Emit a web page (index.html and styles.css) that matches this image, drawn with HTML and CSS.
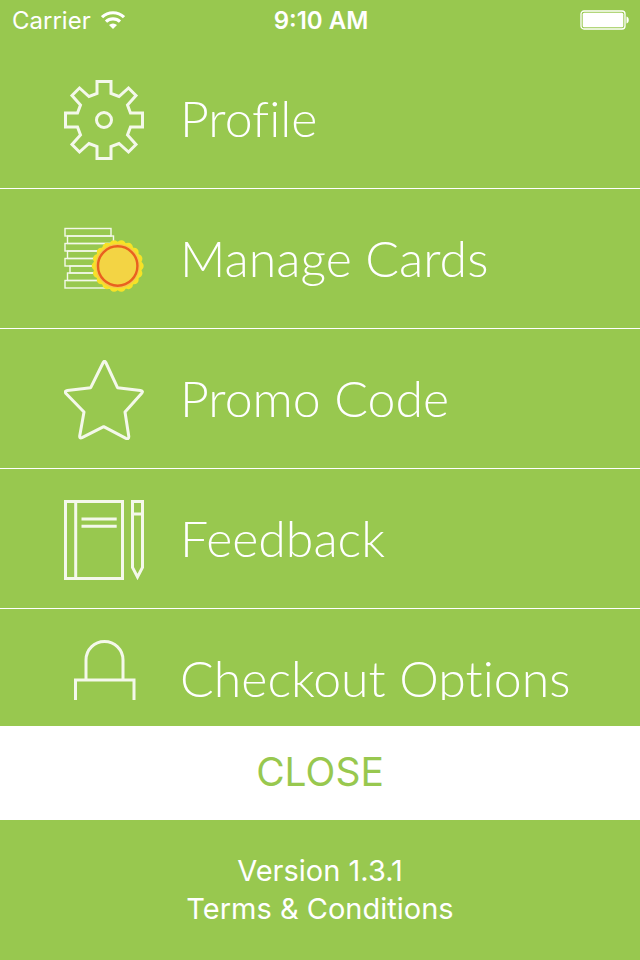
FILE: index.html
```html
<!DOCTYPE html>
<html lang="en">
<head>
    <meta charset="UTF-8">
    <meta name="viewport" content="width=device-width, initial-scale=1.0">
    <title>Menu</title>
    <link rel="stylesheet" href="styles.css">
</head>
<body>
    <header class="status-bar">
        <div class="carrier">
            <span>Carrier</span>
            <svg class="wifi" viewBox="0 0 24 18" width="24" height="18">
                <path d="M1 6.2a15.8 15.8 0 0 1 22 0M5 10.7a10.2 10.2 0 0 1 14 0" fill="none" stroke="#fff" stroke-width="3.2"/>
                <path d="M12 18l-4-4a6 6 0 0 1 8 0z" fill="#fff"/>
            </svg>
        </div>
        <div class="time">9:10 AM</div>
        <div class="battery">
            <svg viewBox="0 0 50 20" width="50" height="20">
                <rect x="1" y="1" width="44" height="18" rx="3" fill="none" stroke="#fff" stroke-width="1.3"/>
                <rect x="2.7" y="2.7" width="40.6" height="14.6" rx="1.5" fill="#fff"/>
                <path d="M46.5 6.5c3 .5 3 6.5 0 7z" fill="#fff"/>
            </svg>
        </div>
    </header>

    <nav class="menu">
        <a class="menu-item" href="#profile">
            <svg class="icon" viewBox="0 0 80 80">
                <path d="M33 1.5H47V13.5L55 16.5 64.5 8 72 15.5 63.5 25 66.5 33H78.5V47H66.5L63.5 55 72 64.5 64.5 72 55 63.5 47 66.5V78.5H33V66.5L25 63.5 15.5 72 8 64.5 16.5 55 13.5 47H1.5V33H13.5L16.5 25 8 15.5 15.5 8 25 16.5 33 13.5Z"/>
                <circle cx="40" cy="40" r="7.5"/>
            </svg>
            <span class="label">Profile</span>
        </a>
        <a class="menu-item" href="#cards">
            <svg class="icon" viewBox="0 0 80 80">
                <g class="stack">
                    <rect x="1" y="8.5" width="46" height="7.5"/>
                    <rect x="3.5" y="16" width="46" height="7.5"/>
                    <rect x="1" y="23.5" width="46" height="7.5"/>
                    <rect x="3.5" y="31" width="46" height="7.5"/>
                    <rect x="1" y="38.5" width="46" height="7.5"/>
                    <rect x="6" y="46" width="43" height="7"/>
                    <rect x="3.5" y="53" width="43" height="7.5"/>
                    <rect x="1" y="60.5" width="46" height="7.5"/>
                </g>
                <circle class="coin-edge" cx="53.7" cy="46" r="21.5" pathLength="180"/>
                <circle class="coin-rim" cx="53.7" cy="46" r="23.2"/>
                <circle class="coin-face" cx="53.7" cy="46" r="19.7"/>
            </svg>
            <span class="label">Manage Cards</span>
        </a>
        <a class="menu-item" href="#promo">
            <svg class="icon" viewBox="0 0 80 80">
                <path stroke-linejoin="round" d="M39.2 2.5Q40.5 0 41.800 2.5L53.5 27.7 76.5 30.5Q79.8 31 77.5 33.5L61 52 64.8 76.5Q64.8 79.5 62 78.3L39.7 66.7 18 77.7Q15.5 78.8 15.7 76L20 52 2 33.5Q0 31 3.3 30.4L26.7 27.7Z"/>
            </svg>
            <span class="label">Promo Code</span>
        </a>
        <a class="menu-item" href="#feedback">
            <svg class="icon" viewBox="0 0 80 80">
                <path d="M1.5 1.5H58.5V78.5H1.5ZM11.7 1.5V78.5M17.5 19H52.7M17.5 26.2H52.7M68.5 1.5H78.5V67.5L73.5 77 68.5 67.5ZM68.5 14H78.5"/>
            </svg>
            <span class="label">Feedback</span>
        </a>
        <a class="menu-item" href="#checkout">
            <svg class="icon" viewBox="0 0 80 80">
                <path d="M22 40V20a18.5 18.5 0 0 1 37 0V40M11.5 78.5V40H70V78.5Z"/>
            </svg>
            <span class="label">Checkout Options</span>
        </a>
    </nav>

    <button class="close" type="button">CLOSE</button>

    <footer class="footer">
        <div>Version 1.3.1</div>
        <a href="#terms">Terms &amp; Conditions</a>
    </footer>
</body>
</html>
```

FILE: styles.css
```css
* {
    box-sizing: border-box;
}
body {
    display: flex;
    flex-direction: column;
    height: 100vh;
    margin: 0;
    background: #98c84f;
    color: #fff;
    font-family: Inter, "Liberation Sans", sans-serif;
}
a {
    color: inherit;
    text-decoration: none;
}

/* Status bar */
.status-bar {
    display: grid;
    grid-template-columns: 1fr auto 1fr;
    align-items: center;
    height: 40px;
    padding: 0 10px 0 12px;
    font-size: 24px;
    flex-shrink: 0;
}
.carrier {
    display: flex;
    align-items: center;
    gap: 10px;
}
.time {
    font-weight: 600;
}
.battery {
    display: flex;
    justify-content: flex-end;
}

/* Menu */
.menu {
    flex: 1;
    min-height: 0;
    margin: 9px 0 26px;
    overflow: hidden;
}
.menu-item {
    display: flex;
    align-items: center;
    gap: 36px;
    height: 140px;
    padding: 2px 64px 0;
    border-bottom: 1px solid #fff;
    font-family: Lato, "Open Sans", sans-serif;
    font-size: 50px;
    font-weight: 300;
    font-variant-ligatures: none;
    white-space: nowrap;
}
.label {
    padding-bottom: 4px;
}
.icon {
    width: 80px;
    height: 80px;
    flex-shrink: 0;
    fill: none;
    stroke: #f4f8ea;
    stroke-width: 3;
}
.stack {
    stroke-width: 1.4;
}
.coin-edge {
    stroke: #f6e227;
    stroke-width: 9;
    stroke-linecap: round;
    stroke-dasharray: 0 10;
}
.coin-rim {
    fill: #f4c64c;
    stroke: #f6e227;
    stroke-width: 2;
}
.coin-face {
    fill: #f3d444;
    stroke: #e9601f;
    stroke-width: 2.4;
}

/* Bottom */
.close {
    height: 94px;
    flex-shrink: 0;
    padding: 0 0 4px;
    border: none;
    background: #fff;
    color: #98c84f;
    font-family: inherit;
    font-size: 39px;
    cursor: pointer;
}
.footer {
    display: flex;
    flex-direction: column;
    align-items: center;
    justify-content: center;
    height: 140px;
    flex-shrink: 0;
    font-size: 29px;
    line-height: 38px;
}
```
